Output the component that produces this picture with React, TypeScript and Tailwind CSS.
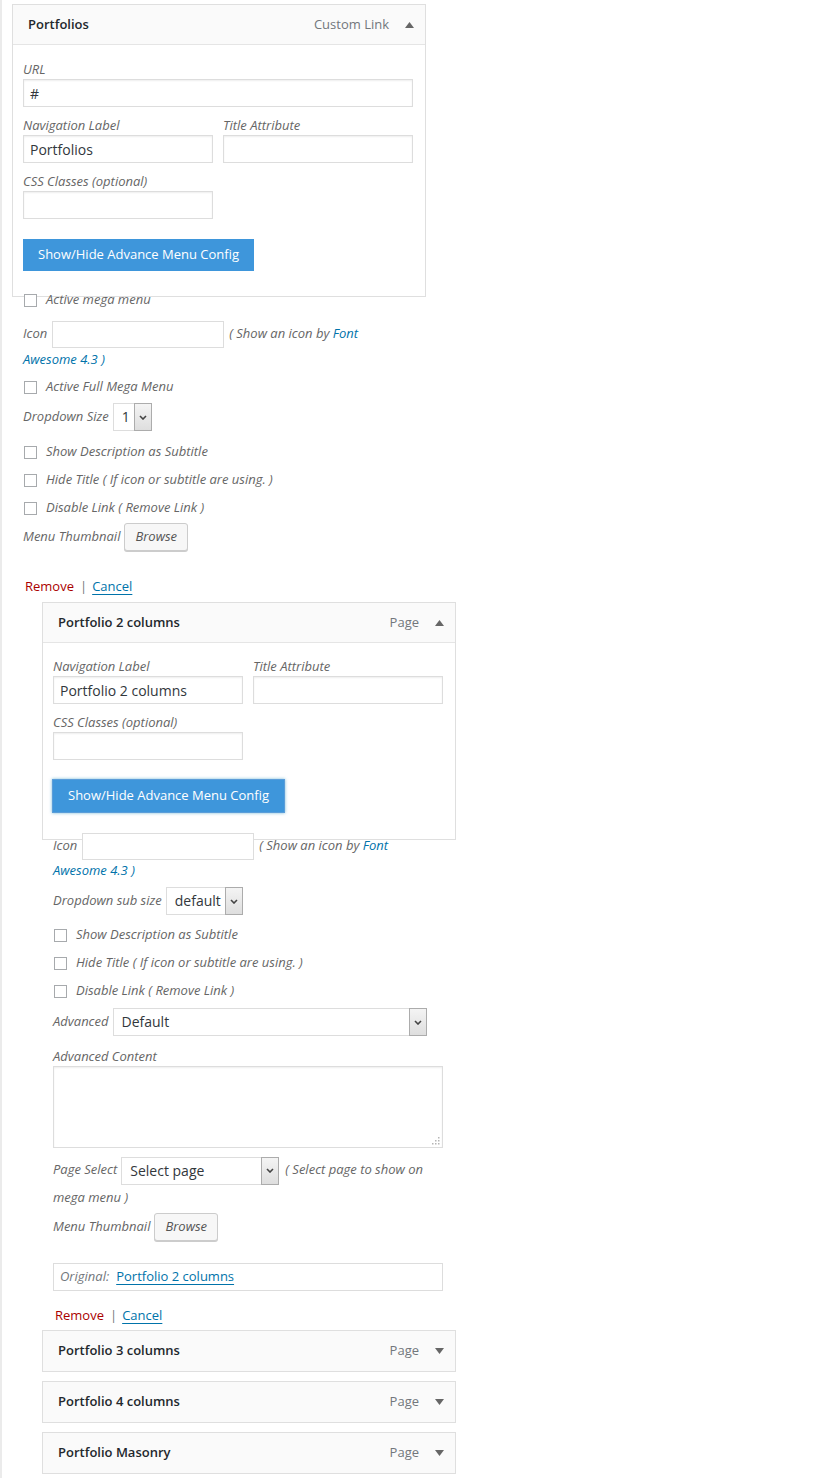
import type { ReactNode } from 'react'

function Arrow({ up }: { up: boolean }) {
  return (
    <svg width="9" height="6" viewBox="0 0 9 6" className="ml-[16px] shrink-0">
      {up ? <polygon points="0,6 4.5,0 9,6" fill="#666" /> : <polygon points="0,0 4.5,6 9,0" fill="#666" />}
    </svg>
  )
}

function ItemHeader({ title, type, open }: { title: string; type: string; open: boolean }) {
  return (
    <div className={`flex items-center h-[40px] pl-[15px] pr-[11px] bg-[#fafafa] ${open ? 'border-b border-[#e5e5e5]' : ''}`}>
      <span className="flex-1 text-[13px] font-semibold text-[#23282d]">{title}</span>
      <span className="text-[13px] text-[#72777c]">{type}</span>
      <Arrow up={open} />
    </div>
  )
}

function Label({ children }: { children: ReactNode }) {
  return <div className="text-[13px] italic leading-[20px] text-[#666]">{children}</div>
}

function TextInput({ value = '', className = '' }: { value?: string; className?: string }) {
  return (
    <div className={`h-[28px] flex items-center pl-[6px] border border-[#ddd] bg-white shadow-[inset_0_1px_2px_rgba(0,0,0,0.07)] text-[14px] text-[#32373c] ${className}`}>
      {value}
    </div>
  )
}

function Select({ value, width, className = '' }: { value: string; width: string; className?: string }) {
  return (
    <span className={`inline-flex align-middle h-[28px] border border-[#ddd] bg-white not-italic ${width} ${className}`}>
      <span className="flex-1 flex items-center pl-[8px] text-[14px] leading-[20px] text-[#32373c]">{value}</span>
      <span className="w-[18px] -my-px -mr-px flex items-center justify-center border border-[#acacac] bg-gradient-to-b from-[#f4f4f4] to-[#dedede]">
        <svg width="8" height="5" viewBox="0 0 8 5">
          <polyline points="1,1 4,4 7,1" fill="none" stroke="#444" strokeWidth="1.6" />
        </svg>
      </span>
    </span>
  )
}

function CheckRow({ text, className = '' }: { text: string; className?: string }) {
  return (
    <div className={`flex items-center h-[28px] ${className}`}>
      <span className="ml-[1px] w-[13px] h-[13px] border border-[#a7aaad] bg-white shrink-0" />
      <span className="ml-[9px] text-[13px] italic text-[#666]">{text}</span>
    </div>
  )
}

function BrowseRow({ className = '' }: { className?: string }) {
  return (
    <div className={`flex items-center h-[28px] gap-[4px] ${className}`}>
      <span className="text-[13px] italic text-[#666]">Menu Thumbnail</span>
      <span className="h-[28px] px-[10px] flex items-center rounded-[3px] border border-[#ccc] bg-[#f7f7f7] shadow-[0_1px_0_#ccc] text-[13px] italic text-[#555]">
        Browse
      </span>
    </div>
  )
}

function IconRow({ className = '' }: { className?: string }) {
  return (
    <div className={`w-[390px] text-[13px] italic text-[#666] ${className}`}>
      <span>Icon</span>
      <span className="inline-block align-middle -my-[2px] ml-[5px] mr-[5px] w-[172px] h-[27px] border border-[#ddd] bg-white" />
      <span>( Show an icon by </span>
      <span className="text-[#0073aa]">Font Awesome 4.3 )</span>
    </div>
  )
}

function Actions({ className = '' }: { className?: string }) {
  return (
    <div className={`flex items-center h-[28px] pl-[2px] text-[13px] ${className}`}>
      <span className="text-[#a00]">Remove</span>
      <span className="ml-[6px] mr-[4px] text-[#72777c]">|</span>
      <span className="text-[#0073aa] underline underline-offset-[3px] px-[1px]">Cancel</span>
    </div>
  )
}

function ConfigButton({ focused }: { focused?: boolean }) {
  return (
    <div
      className={`h-[32px] w-[231px] flex items-center pl-[15px] bg-[#3e96db] text-[13px] text-white ${
        focused ? 'shadow-[0_0_0_1px_#5b9dd9,0_0_3px_1px_rgba(30,140,190,0.6)]' : ''
      }`}
    >
      Show/Hide Advance Menu Config
    </div>
  )
}

function Collapsed({ title, className = '' }: { title: string; className?: string }) {
  return (
    <div className={`ml-[40px] w-[414px] border border-[#dfdfdf] bg-[#fafafa] ${className}`}>
      <ItemHeader title={title} type="Page" open={false} />
    </div>
  )
}

export default function App() {
  return (
    <div className="min-h-screen bg-white border-l-2 border-[#ebebeb] pt-[4px] font-['Open_Sans',sans-serif]">
      {/* Custom link item */}
      <div className="ml-[10px] w-[414px]">
        <div className="h-[293px] border border-[#dfdfdf] bg-white">
          <ItemHeader title="Portfolios" type="Custom Link" open />
          <div className="pt-[14px] pl-[10px] pr-[12px]">
            <Label>URL</Label>
            <TextInput value="#" />
            <div className="grid grid-cols-2 gap-x-[10px] mt-[8px]">
              <div>
                <Label>Navigation Label</Label>
                <TextInput value="Portfolios" />
              </div>
              <div>
                <Label>Title Attribute</Label>
                <TextInput />
              </div>
            </div>
            <div className="mt-[8px] w-[190px]">
              <Label>CSS Classes (optional)</Label>
              <TextInput />
            </div>
            <div className="mt-[20px]">
              <ConfigButton />
            </div>
          </div>
        </div>

        <div className="ml-[11px] -mt-[11px]">
          <CheckRow text="Active mega menu" />
          <IconRow className="mt-[6px] leading-[26px]" />
          <CheckRow text="Active Full Mega Menu" className="mt-[1px]" />
          <div className="flex items-center h-[28px] mt-[2px] gap-[4px]">
            <span className="text-[13px] italic text-[#666]">Dropdown Size</span>
            <Select value="1" width="w-[39px]" />
          </div>
          <CheckRow text="Show Description as Subtitle" className="mt-[7px]" />
          <CheckRow text="Hide Title ( If icon or subtitle are using. )" />
          <CheckRow text="Disable Link ( Remove Link )" />
          <BrowseRow className="mt-[1px]" />
          <div className="-ml-[11px] pl-[11px]">
            <Actions className="mt-[22px]" />
          </div>
        </div>
      </div>

      {/* Page item */}
      <div className="ml-[40px] mt-[1px] w-[414px]">
        <div className="h-[238px] border border-[#dfdfdf] bg-white">
          <ItemHeader title="Portfolio 2 columns" type="Page" open />
          <div className="pt-[13px] pl-[10px] pr-[12px]">
            <div className="grid grid-cols-2 gap-x-[10px]">
              <div>
                <Label>Navigation Label</Label>
                <TextInput value="Portfolio 2 columns" />
              </div>
              <div>
                <Label>Title Attribute</Label>
                <TextInput />
              </div>
            </div>
            <div className="mt-[8px] w-[190px]">
              <Label>CSS Classes (optional)</Label>
              <TextInput />
            </div>
            <div className="mt-[20px]">
              <ConfigButton focused />
            </div>
          </div>
        </div>

        <div className="ml-[11px] -mt-[7px]">
          <IconRow className="leading-[25px]" />
          <div className="flex items-center h-[28px] mt-[4px] gap-[4px]">
            <span className="text-[13px] italic text-[#666]">Dropdown sub size</span>
            <Select value="default" width="w-[77px]" />
          </div>
          <CheckRow text="Show Description as Subtitle" className="mt-[6px]" />
          <CheckRow text="Hide Title ( If icon or subtitle are using. )" />
          <CheckRow text="Disable Link ( Remove Link )" />
          <div className="flex items-center h-[28px] mt-[3px] gap-[4px]">
            <span className="text-[13px] italic text-[#666]">Advanced</span>
            <Select value="Default" width="w-[314px]" />
          </div>
          <div className="mt-[10px]">
            <Label>Advanced Content</Label>
            <div className="relative w-[390px] h-[82px] border border-[#ddd] bg-white shadow-[inset_0_1px_2px_rgba(0,0,0,0.07)]">
              <svg width="8" height="8" viewBox="0 0 8 8" className="absolute right-[2px] bottom-[2px]">
                <rect x="6" y="0" width="1.5" height="1.5" fill="#b5b5b5" />
                <rect x="3" y="3" width="1.5" height="1.5" fill="#b5b5b5" />
                <rect x="6" y="3" width="1.5" height="1.5" fill="#b5b5b5" />
                <rect x="0" y="6" width="1.5" height="1.5" fill="#b5b5b5" />
                <rect x="3" y="6" width="1.5" height="1.5" fill="#b5b5b5" />
                <rect x="6" y="6" width="1.5" height="1.5" fill="#b5b5b5" />
              </svg>
            </div>
          </div>
          <div className="w-[390px] mt-[7px] leading-[28px] text-[13px] italic text-[#666]">
            <span>Page Select</span>
            <span className="inline-block w-[4px]" />
            <Select value="Select page" width="w-[158px]" className="-my-[3px]" />
            <span className="ml-[6px]">( Select page to show on mega menu )</span>
          </div>
          <BrowseRow className="mt-[2px]" />
          <div className="mt-[22px] w-[390px] h-[28px] flex items-center pl-[6px] border border-[#ddd] text-[13px]">
            <span className="italic text-[#72777c]">Original:</span>
            <span className="ml-[7px] text-[#0073aa] underline underline-offset-[3px]">Portfolio 2 columns</span>
          </div>
          <Actions className="mt-[11px]" />
        </div>
      </div>

      <Collapsed title="Portfolio 3 columns" className="mt-[0px]" />
      <Collapsed title="Portfolio 4 columns" className="mt-[9px]" />
      <Collapsed title="Portfolio Masonry" className="mt-[9px]" />
    </div>
  )
}
